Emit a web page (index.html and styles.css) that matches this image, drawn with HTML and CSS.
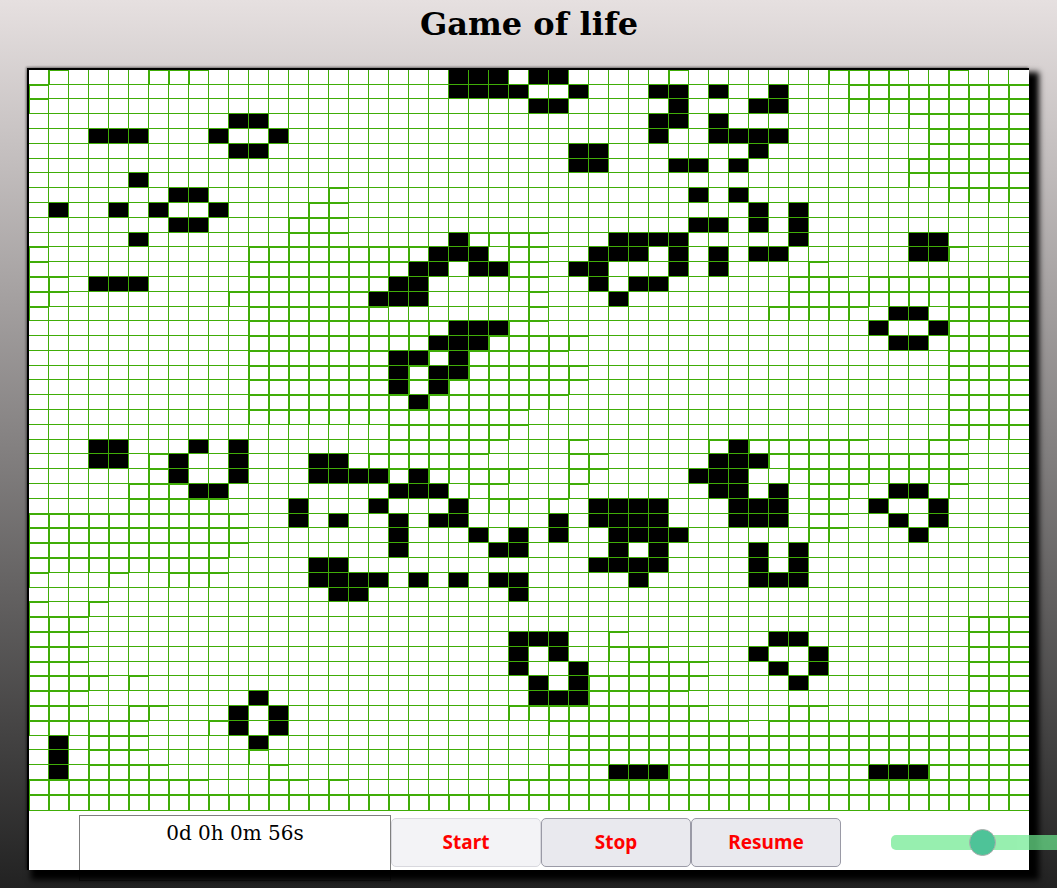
FILE: index.html
```html
<!DOCTYPE html>
<html lang="en">
<head>
  <meta charset="UTF-8">
  <title>Game of life</title>
  <link rel="stylesheet" href="styles.css">
</head>
<body>
  <h1>Game of life</h1>
  <div class="board">
    <div class="grid" id="grid"></div>
    <div class="controls">
      <div class="timer">0d 0h 0m 56s</div>
      <button class="btn btn-idle">Start</button>
      <button class="btn">Stop</button>
      <button class="btn">Resume</button>
      <input class="speed" type="range" min="0" max="100" value="45">
    </div>
  </div>
  <script src="script.js"></script>
</body>
</html>
```

FILE: styles.css
```css
html, body { margin: 0; height: 100%; }
body { background: linear-gradient(#e6e0e0, #222222); overflow: hidden; font-family: "DejaVu Serif", serif; }
h1 { margin: 0; height: 67.75px; padding: 5px 0 0 1px; box-sizing: border-box; text-align: center; font-size: 32px; line-height: 38px; color: #000; }
.board { width: 1000px; margin-left: 27px; border-left: 2px solid #000; border-top: 2px solid #000; background: #fff; box-shadow: 7px 7px 6px 3px #000, -1px -1px 2px #0006; }
.grid { display: grid; grid-template-columns: repeat(50, 20px); grid-template-rows: repeat(49, 14.8px) 16px; }
.cell { box-sizing: border-box; border-right: 1px solid #40ad08; border-bottom: 1px solid #40ad08; }
.cell:nth-child(50n) { border-right: none; }
.cell.fresh { box-shadow: inset 1px 1px 0 #40ad08; }
.cell.alive { background: #000; }
.controls { display: flex; align-items: flex-start; height: 59.2px; padding-left: 50px; }
.timer { box-sizing: border-box; flex: none; width: 312px; height: 66px; margin-top: 4px; border: 1px solid rgba(0, 0, 0, 0.5); text-align: center; font-size: 20px; line-height: 34px; color: #000; }
.btn { flex: none; box-sizing: border-box; width: 150px; height: 49px; margin-top: 7px; background: #e9e9ee; border: 1px solid #9a9aa6; border-radius: 5px; font-family: "Noto Sans", sans-serif; font-weight: bold; font-size: 19px; color: #f00; }
.btn-idle { background: #f3f3f6; border-color: #d8d8de; }
.speed { flex: none; -webkit-appearance: none; appearance: none; width: 200px; height: 15px; margin: 24px 0 0 50px; background: #6ce98e; border-radius: 5px; opacity: 0.7; outline: none; }
.speed::-webkit-slider-thumb { -webkit-appearance: none; appearance: none; box-sizing: border-box; width: 27px; height: 27px; background: #04aa6d; border: 1px solid #8a8a8a; border-radius: 50%; }
```

FILE: script.js
```js
// board state at 56s: live cells per row
const alive = {
  0: [21, 22, 23, 25, 26],
  1: [21, 22, 23, 24, 27, 31, 32, 34, 37],
  2: [25, 26, 32, 36, 37],
  3: [10, 11, 31, 32, 34],
  4: [3, 4, 5, 9, 12, 31, 34, 35, 36, 37],
  5: [10, 11, 27, 28, 36],
  6: [27, 28, 32, 33, 35],
  7: [5],
  8: [7, 8, 33, 35],
  9: [1, 4, 6, 9, 36, 38],
  10: [7, 8, 33, 34, 36, 38],
  11: [5, 21, 29, 30, 31, 32, 38, 44, 45],
  12: [20, 21, 22, 28, 29, 30, 32, 34, 36, 37, 44, 45],
  13: [19, 20, 22, 23, 27, 28, 32, 34],
  14: [3, 4, 5, 18, 19, 28, 30, 31],
  15: [17, 18, 19, 29],
  16: [43, 44],
  17: [21, 22, 23, 42, 45],
  18: [20, 21, 22, 43, 44],
  19: [18, 19, 21],
  20: [18, 20, 21],
  21: [18, 20],
  22: [19],
  25: [3, 4, 8, 10, 35],
  26: [3, 4, 7, 10, 14, 15, 34, 35, 36],
  27: [7, 10, 14, 15, 16, 17, 19, 33, 34, 35],
  28: [8, 9, 18, 19, 20, 34, 35, 37, 43, 44],
  29: [13, 17, 21, 28, 29, 30, 31, 35, 36, 37, 42, 45],
  30: [13, 15, 18, 20, 21, 26, 28, 29, 30, 31, 35, 36, 37, 43, 45],
  31: [18, 22, 24, 26, 29, 30, 31, 32, 44],
  32: [18, 23, 24, 29, 31, 36, 38],
  33: [14, 15, 28, 29, 30, 31, 36, 38],
  34: [14, 15, 16, 17, 19, 21, 23, 24, 30, 36, 37, 38],
  35: [15, 16, 24],
  38: [24, 25, 26, 37, 38],
  39: [24, 26, 36, 39],
  40: [24, 27, 37, 39],
  41: [25, 27, 38],
  42: [11, 25, 26, 27],
  43: [10, 12],
  44: [10, 12],
  45: [1, 11],
  46: [1],
  47: [1, 29, 30, 31, 42, 43, 44]
};

// cells that have never been alive keep the heavier outline: [from, to] per row
const fresh = {
  0: [[1, 1], [6, 8], [32, 32], [40, 43], [46, 46]],
  1: [[0, 0], [41, 49]],
  2: [[0, 0], [41, 49]],
  3: [[44, 49]],
  4: [[45, 49]],
  5: [[45, 49]],
  6: [[44, 49]],
  7: [[44, 49]],
  8: [[15, 15], [46, 49]],
  9: [[14, 15]],
  10: [[13, 15]],
  11: [[13, 15], [22, 25]],
  12: [[0, 0], [11, 19], [24, 25], [46, 46]],
  13: [[0, 0], [11, 18], [24, 25], [39, 39]],
  14: [[0, 1], [11, 17], [24, 25], [38, 40], [42, 49]],
  15: [[0, 1], [10, 17], [25, 25], [38, 49]],
  16: [[0, 0], [11, 17], [25, 25], [37, 41], [46, 49]],
  17: [[11, 20], [24, 25], [46, 49]],
  18: [[11, 27], [46, 49]],
  19: [[11, 26], [46, 49]],
  20: [[11, 27], [46, 49]],
  21: [[11, 27], [46, 49]],
  22: [[11, 26], [46, 49]],
  23: [[11, 24], [46, 49]],
  24: [[18, 24], [46, 49]],
  25: [[18, 23], [27, 27], [34, 34], [36, 41], [45, 46]],
  26: [[6, 6], [17, 22], [27, 28], [37, 46]],
  27: [[6, 6], [18, 18], [20, 24], [27, 28], [38, 46]],
  28: [[5, 7], [22, 23], [27, 27], [39, 41], [46, 46]],
  29: [[5, 9], [23, 24], [26, 26], [39, 40]],
  30: [[0, 10], [39, 40]],
  31: [[0, 10], [39, 40]],
  32: [[0, 10]],
  33: [[0, 9]],
  34: [[0, 0], [4, 4], [7, 9]],
  36: [[0, 0], [3, 3]],
  37: [[0, 2], [47, 49]],
  38: [[0, 2], [29, 29], [47, 49]],
  39: [[0, 2], [29, 31], [47, 49]],
  40: [[0, 2], [30, 33], [47, 49]],
  41: [[0, 3], [5, 5], [28, 33], [47, 49]],
  42: [[0, 2], [28, 32], [47, 49]],
  43: [[0, 2], [5, 6], [24, 33], [38, 39], [47, 49]],
  44: [[0, 5], [9, 9], [26, 35], [37, 49]],
  45: [[3, 5], [27, 49]],
  46: [[3, 5], [11, 11], [27, 49]],
  47: [[3, 6], [12, 12], [26, 28], [32, 49]],
  48: [[0, 8], [12, 13], [15, 15], [24, 49]],
  49: [[0, 49]]
};

const grid = document.getElementById('grid');
for (let r = 0; r < 50; r++) {
  for (let c = 0; c < 50; c++) {
    const cell = document.createElement('div');
    cell.className = 'cell';
    if ((alive[r] || []).includes(c)) {
      cell.classList.add('alive');
    } else if ((fresh[r] || []).some(([a, b]) => c >= a && c <= b)) {
      cell.classList.add('fresh');
    }
    grid.appendChild(cell);
  }
}
```
